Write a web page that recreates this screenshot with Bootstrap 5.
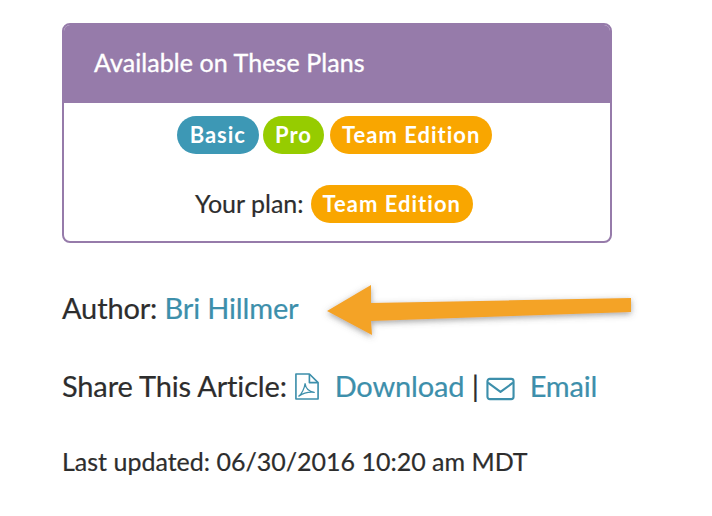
<!DOCTYPE html>
<html lang="en">
<head>
<meta charset="utf-8">
<title>Plans</title>
<link rel="stylesheet" href="https://cdn.jsdelivr.net/npm/bootstrap@5.3.0/dist/css/bootstrap.min.css">
<style>
html,body{height:516px;overflow:hidden}
body{font-family:Lato,"Liberation Sans",sans-serif;color:#2d2d2d;background:#fff;position:relative;-webkit-text-stroke:.2px}
.page-wrap{padding:23px 0 0 62px;width:612px;box-sizing:content-box}
.plan-box{width:550px;height:220px;border:2px solid #967baa;border-radius:8px;--bs-card-bg:#fff;overflow:hidden}
.plan-head{background:#967baa;color:#fff;height:79px;margin:-1px -1px 0;padding:0 0 2px 31px;font-size:25px;letter-spacing:.08px;-webkit-text-stroke:.35px;display:flex;align-items:center}
.plan-body{font-size:25px;line-height:38px;padding-top:13px;text-align:center}
.plan-row{display:flex;justify-content:center;gap:4px;height:38px;padding-right:5px}
.plan-row+.plan-row{margin-top:31px;gap:7px;padding-right:6px}
.plan-label{line-height:36px}
.tag{font-size:22px;font-weight:700;letter-spacing:1px;color:#fff;height:38px;line-height:38px;border-radius:19px;padding:0 12px;-webkit-text-stroke:0}
.tag-basic{background:#3d98b5;padding:0 13px}
.tag-pro{background:#96cc00;margin-right:2px}
.tag-team{background:#f9a600}
.meta{font-size:29px;letter-spacing:-.15px;line-height:38px;margin:0}
.meta a{color:#3d8fab;text-decoration:none}
.meta-author{margin-top:46px}
.meta-share{margin-top:40px}
.meta-share svg{vertical-align:-4px;color:#3d8fab}
.meta-updated{font-size:25px;letter-spacing:0;margin-top:37px}
.arrow-overlay{position:absolute;left:320px;top:275px}
</style>
</head>
<body>
<div class="page-wrap">
  <div class="card plan-box">
    <div class="plan-head">Available on These Plans</div>
    <div class="plan-body">
      <div class="plan-row"><span class="tag tag-basic">Basic</span><span class="tag tag-pro">Pro</span><span class="tag tag-team">Team Edition</span></div>
      <div class="plan-row"><span class="plan-label">Your plan:</span><span class="tag tag-team">Team Edition</span></div>
    </div>
  </div>
  <p class="meta meta-author">Author: <a href="#">Bri Hillmer</a></p>
  <p class="meta meta-share">Share This Article:
    <a href="#"><svg width="26" height="29" viewBox="0 0 27 29" fill="none" stroke="currentColor" stroke-width="1.7" stroke-linejoin="round"><path d="M2 1.5H16L25 10.5V27.5H2Z"/><path d="M16 1.5V10.5H25"/><path d="M5 24.5C8 22.5 11 16 11.5 11.5C12 15.5 15 19.5 21 20.5C16 20 10 21 5 24.5Z" stroke-width="1.3"/></svg>&nbsp; Download</a> | <a href="#"><svg width="29" height="24" viewBox="0 0 30 24" fill="none" stroke="currentColor" stroke-width="2.2" stroke-linejoin="round"><rect x="1.5" y="1.5" width="27" height="21" rx="2.5"/><path d="M2 5.5L15 15L28 5.5"/></svg>&nbsp; Email</a></p>
  <p class="meta meta-updated">Last updated: 06/30/2016 10:20 am MDT</p>
</div>
<svg class="arrow-overlay" width="330" height="70" viewBox="320 275 330 70">
  <defs><filter id="arrowShade" x="-5%" y="-30%" width="110%" height="170%"><feDropShadow dx="0" dy="2" stdDeviation="3" flood-color="#555" flood-opacity=".55"/></filter></defs>
  <polygon points="327,311 371,285 371,303 631,298 631,312 371,321 372,335" fill="#f4a327" filter="url(#arrowShade)"/>
</svg>
<script src="https://cdn.jsdelivr.net/npm/bootstrap@5.3.0/dist/js/bootstrap.bundle.min.js"></script>
</body>
</html>
